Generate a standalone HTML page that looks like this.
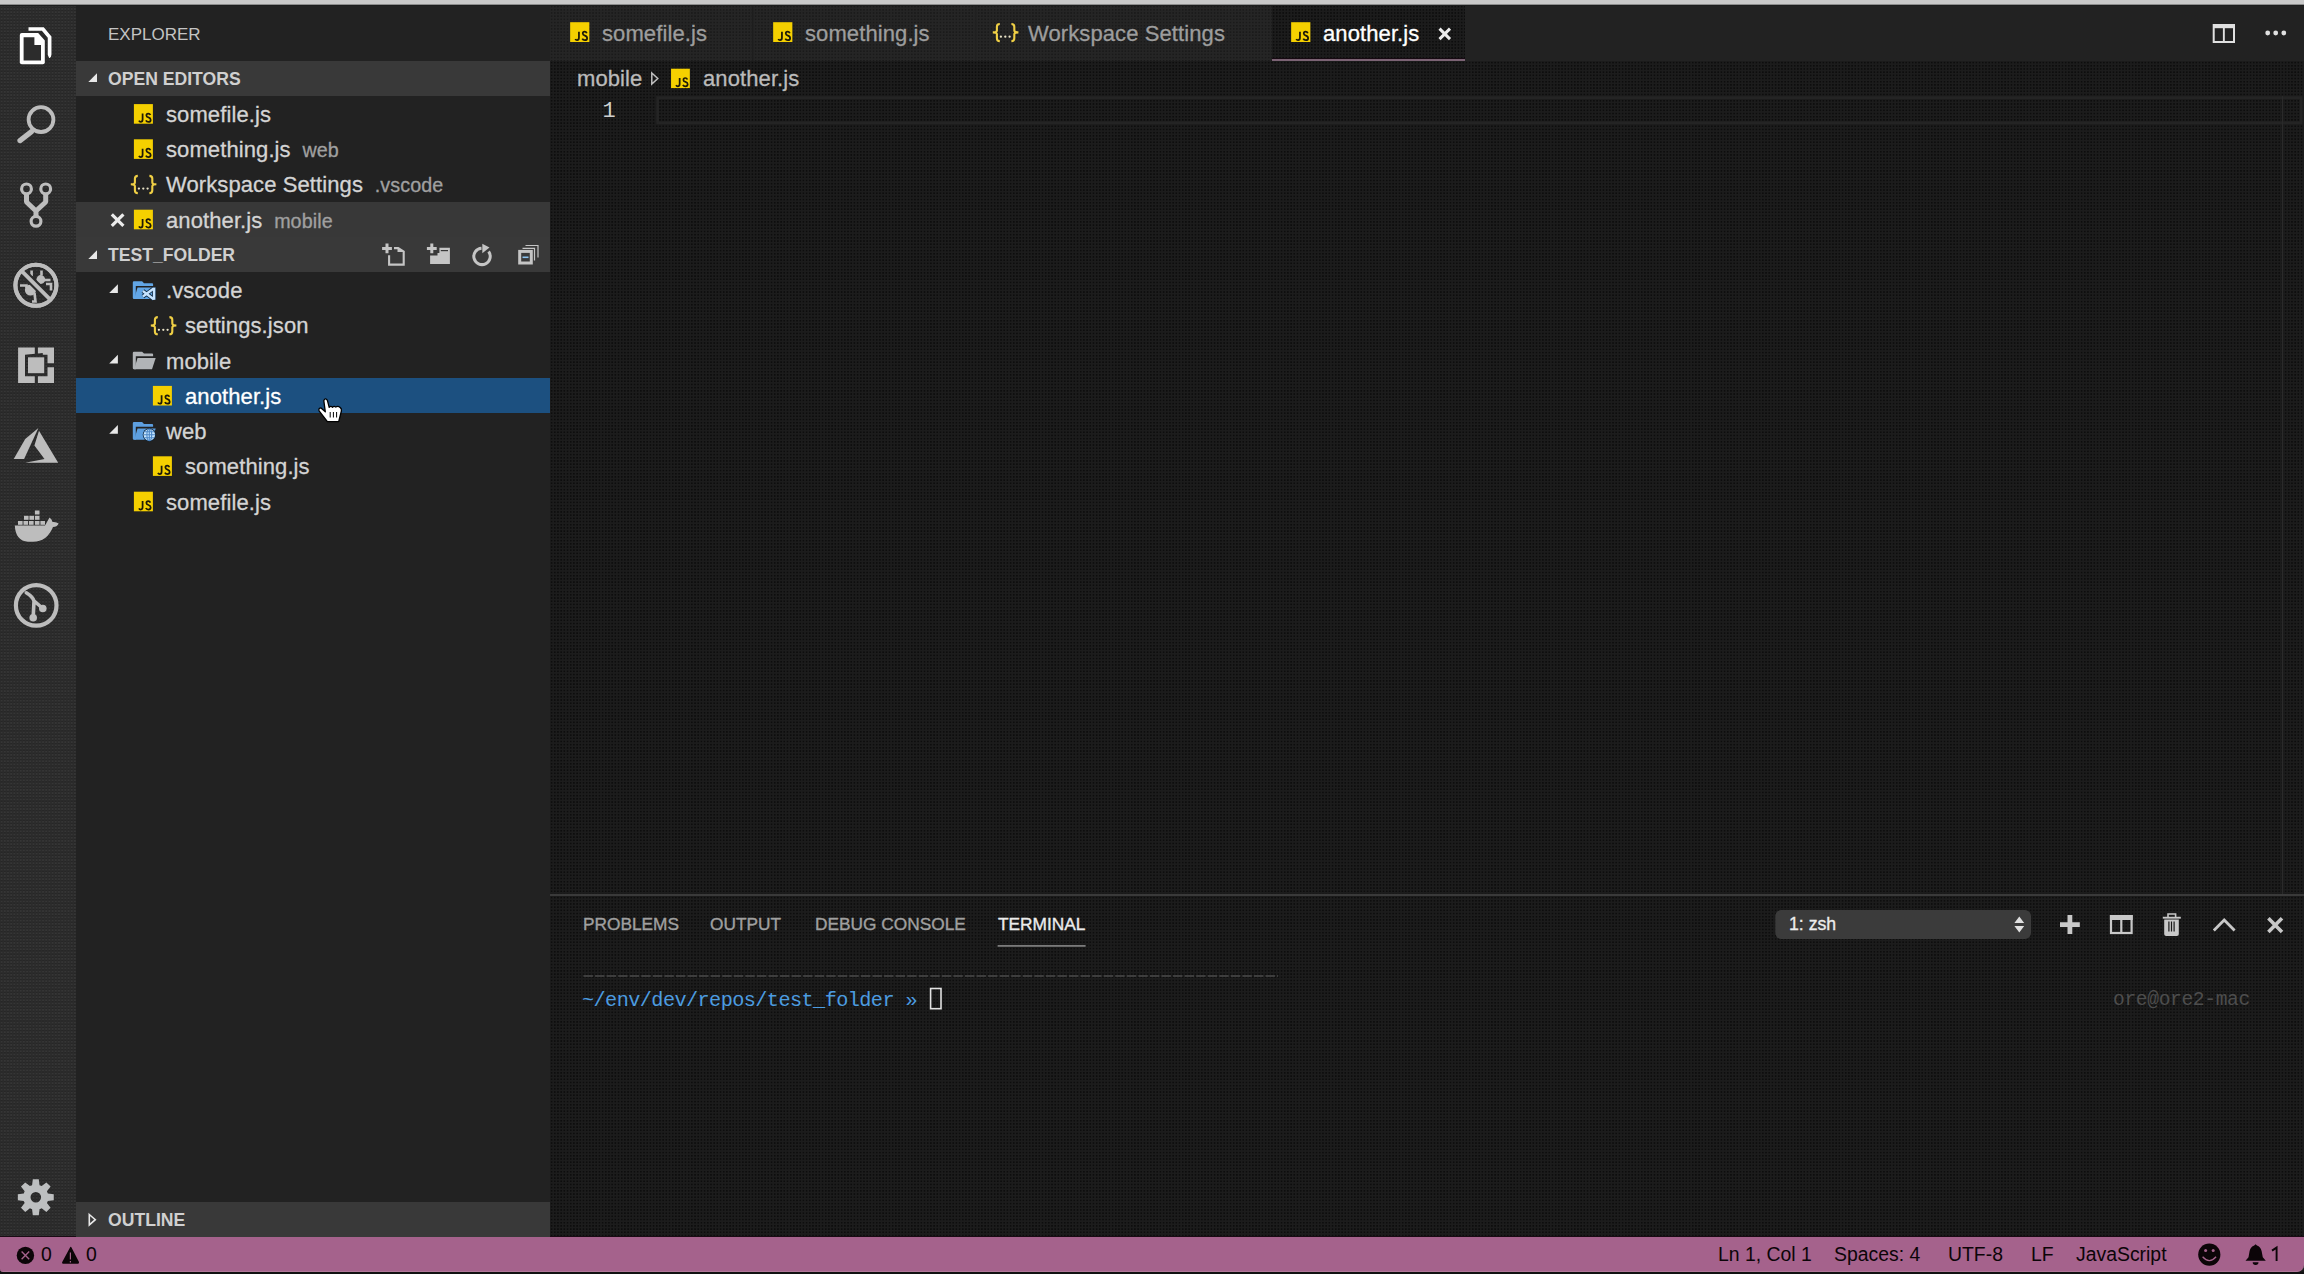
<!DOCTYPE html>
<html><head><meta charset="utf-8">
<style>
html,body{margin:0;padding:0;width:2304px;height:1274px;overflow:hidden;background:#191919;font-family:"Liberation Sans",sans-serif;}
div,span,svg{box-sizing:border-box}
.a{position:absolute}
#topbar{left:0;top:0;width:2304px;height:5px;background:#c9c9c9;border-bottom:1px solid #8c8c8c}
#topline{left:0;top:5px;width:2304px;height:1px;background:#1c1d1d;z-index:5}
#act{left:0;top:5px;width:76px;height:1232px}
#side{left:76px;top:5px;width:474px;height:1232px;background:#222222}
#tabs{left:550px;top:5px;width:1754px;height:56px;background:#222222}
#bc{left:550px;top:61px;width:1754px;height:35px}
#editor{left:550px;top:96px;width:1754px;height:798px}
#panel{left:550px;top:894px;width:1754px;height:343px;border-top:2px solid #3a3a3a}
#status{left:0;top:1236px;width:2304px;height:36px;background:#a5628c;border-top:1px solid #1a0b14;border-bottom:1px solid #b07898;border-radius:0 0 7px 3px}
#bottom{left:0;top:1272px;width:2304px;height:2px;background:#111}
.txt{white-space:nowrap;font-size:22px;color:#d4d4d4;line-height:35px;margin-top:1px;letter-spacing:0.1px;-webkit-text-stroke:0.3px currentColor}
.hdr{white-space:nowrap;font-size:17.6px;font-weight:bold;color:#d0d0d0;line-height:35px;margin-top:1px}
.mono{font-family:"Liberation Mono",monospace;font-size:20.2px;letter-spacing:-0.56px;line-height:35px;white-space:nowrap}
.st{top:1237px;font-size:19.4px;color:#0c0508;line-height:35px;white-space:nowrap}

div.a.dots{background-color:#1c1c1c;background-image:radial-gradient(circle at 50% 50%, #0d0d0d 0.75px, rgba(13,13,13,0) 1.25px);background-size:3.2px 3.2px}
div.a.dots2{background-color:#252525;background-image:radial-gradient(circle at 50% 50%, #1a1a1a 0.75px, rgba(26,26,26,0) 1.25px);background-size:3.2px 3.2px}
div.a.dots3{background-color:#2b2b2b;background-image:radial-gradient(circle at 50% 25%, #363636 0.7px, rgba(54,54,54,0) 1.2px),radial-gradient(circle at 50% 75%, #262626 0.7px, rgba(38,38,38,0) 1.2px);background-size:3.2px 3.2px}
.desc{font-size:19.7px;color:#a0a0a0}
</style></head><body>
<div id="topbar" class="a"></div>
<div id="topline" class="a"></div>
<div id="act" class="a dots3"></div>
<div id="side" class="a"></div>
<div id="tabs" class="a"></div>
<div class="a dots2" style="left:550px;top:5px;width:722px;height:56px"></div>
<div id="bc" class="a dots"></div>
<div id="editor" class="a dots"></div>
<div id="panel" class="a dots"></div>
<div id="status" class="a"></div>
<div id="bottom" class="a"></div>
<div class="a" style="left:76px;top:61px;width:474px;height:35px;background:#393939"></div>
<div class="a" style="left:76px;top:202px;width:474px;height:35px;background:#383838"></div>
<div class="a" style="left:76px;top:237px;width:474px;height:35px;background:#393939"></div>
<div class="a" style="left:76px;top:378px;width:474px;height:35px;background:#1c5080"></div>
<div class="a" style="left:76px;top:1202px;width:474px;height:35px;background:#393939"></div>
<div class="a dots" style="left:1272px;top:5px;width:193px;height:56px;border-bottom:2px solid #7b6374"></div><div class="a" style="left:1272px;top:58px;width:193px;height:1px;background:#170a12"></div>

<svg class="a" style="left:0;top:0" width="2304" height="1274" viewBox="0 0 2304 1274">
<defs>
<symbol id="js" viewBox="0 0 19 19.6" overflow="visible">
<rect x="0" y="0" width="19" height="19.6" fill="#f5d000"/>
<path d="M8.7 9.4 V15.5 Q8.7 17.8 6.8 17.8 Q5.6 17.8 5.1 16.6" fill="none" stroke="#1e1a08" stroke-width="1.75"/>
<path d="M16.5 10.9 Q15.9 9.4 14.3 9.4 Q12.5 9.4 12.5 11.3 Q12.5 12.7 14.6 13.3 Q16.8 13.9 16.8 15.8 Q16.8 17.8 14.5 17.8 Q12.7 17.8 12 16.3" fill="none" stroke="#1e1a08" stroke-width="1.75"/>
</symbol>
<symbol id="json" viewBox="0 0 27 19" overflow="visible">
<path d="M7.8 0.9 Q4.9 0.9 4.9 3.6 L4.9 7.4 Q4.9 9.3 0.8 9.3 Q4.9 9.3 4.9 11.3 L4.9 15.2 Q4.9 18.1 7.8 18.1" fill="none" stroke="#efcf45" stroke-width="2.1"/>
<path d="M19.4 0.9 Q22.3 0.9 22.3 3.6 L22.3 7.4 Q22.3 9.3 26.4 9.3 Q22.3 9.3 22.3 11.3 L22.3 15.2 Q22.3 18.1 19.4 18.1" fill="none" stroke="#efcf45" stroke-width="2.1"/>
<circle cx="8.9" cy="13.6" r="1.15" fill="#e9e3c8"/><circle cx="13.3" cy="13.6" r="1.15" fill="#e9e3c8"/><circle cx="17.6" cy="13.6" r="1.15" fill="#e9e3c8"/>
</symbol>
<symbol id="tw" viewBox="0 0 9 9" overflow="visible"><path d="M0 8.7 L8.7 0 L8.7 8.7 Z" fill="#e8e8e8"/></symbol>
<symbol id="folder" viewBox="0 0 23 18" overflow="visible">
<path d="M0 1.2 Q0 0 1.2 0 L9.3 0 L11.2 1.9 L19.3 1.9 Q20.3 1.9 20.3 2.9 L20.3 4.6 L3 4.6 L3 17.6 L1.2 17.6 Q0 17.6 0 16.4 Z" fill="currentColor"/>
<path d="M4.7 6.3 L22.9 6.3 L19.2 17.6 L1.4 17.6 Z" fill="currentColor"/>
</symbol>
</defs>

<!-- ===== activity bar ===== -->
<!-- explorer -->
<path d="M28.5 29 L42.9 29 L49.6 37.2 L49.6 54.5 Q49.6 56 48.5 56.5" fill="none" stroke="#fff" stroke-width="3.7" stroke-linejoin="miter"/>
<path d="M21.8 33 L38.2 33 L44.8 40.5 L44.8 62.2 Q44.8 64.2 42.8 64.2 L21.8 64.2 Q19.8 64.2 19.8 62.2 L19.8 35 Q19.8 33 21.8 33 Z" fill="#fff" stroke="#2c2c2c" stroke-width="3"/>
<path d="M21.8 33 L38.2 33 L44.8 40.5 L44.8 62.2 Q44.8 64.2 42.8 64.2 L21.8 64.2 Q19.8 64.2 19.8 62.2 L19.8 35 Q19.8 33 21.8 33 Z" fill="#fff"/>
<path d="M23.6 37.2 L34.4 37.2 L34.4 45.1 L41 45.1 L41 60.4 L23.6 60.4 Z" fill="#2c2c2c"/>
<!-- search -->
<g fill="none" stroke="#bdbdbd">
<circle cx="41" cy="119.6" r="12.4" stroke-width="3.8"/>
<path d="M20 140.6 L31.5 131.6" stroke-width="5.2" stroke-linecap="round"/>
</g>
<!-- git -->
<g fill="none" stroke="#bdbdbd" stroke-width="3.2">
<circle cx="26.5" cy="188.9" r="4.9"/><circle cx="45.7" cy="188.9" r="4.9"/><circle cx="36" cy="221.3" r="4.9"/>
</g>
<path d="M26.5 193.5 L26.5 202 L36 211 L45.7 202 L45.7 193.5 M36 211 L36 216.5" fill="none" stroke="#bdbdbd" stroke-width="5" stroke-linejoin="bevel"/>
<!-- debug -->
<circle cx="35.9" cy="285.3" r="20.5" fill="none" stroke="#bdbdbd" stroke-width="4"/>
<g fill="none" stroke="#bdbdbd" stroke-width="2.6">
<path d="M20 285.5 L26.5 285.5 L26.5 288"/>
<path d="M31.6 270.5 L31.6 276"/>
<path d="M41.5 270.5 L41.5 275"/>
<path d="M44 280 L50.5 280"/>
<path d="M46 284 L51 284 L51 290.5"/>
<path d="M34.5 293 L35.5 301.5 L32 301.5"/>
</g>
<circle cx="30.5" cy="290" r="5.6" fill="#bdbdbd"/>
<circle cx="40.8" cy="279.5" r="4.4" fill="#bdbdbd"/>
<path d="M21.5 270.9 L50.3 299.7" stroke="#2c2c2c" stroke-width="8"/>
<path d="M21.5 270.9 L50.3 299.7" stroke="#bdbdbd" stroke-width="3.8"/>
<circle cx="35.9" cy="285.3" r="20.5" fill="none" stroke="#bdbdbd" stroke-width="4"/>
<!-- extensions -->
<path fill="#bdbdbd" fill-rule="evenodd" d="M18.1 347.6 H54 V383.1 H18.1 Z M25 354.8 V376.2 H47.5 V367.2 H54 V363.3 H47.5 V354.8 H42.8 V353 Z"/>
<rect x="28" y="357.3" width="16.2" height="15.9" fill="#bdbdbd"/>
<rect x="34.8" y="346" width="3.1" height="9" fill="#2c2c2c"/>
<rect x="34.8" y="376" width="3.1" height="8" fill="#2c2c2c"/>
<!-- azure -->
<g fill="#bdbdbd">
<path d="M13.7 458.9 L24.1 458.9 L38.4 428.1 L25.2 439.1 Z"/>
<path d="M39 430.8 L58.2 462.7 L25.2 462.7 L44.5 458.9 L34.4 445.5 Z"/>
</g>
<!-- docker -->
<g fill="#bdbdbd">
<path d="M14.8 525.6 L45 525.6 Q47 522 49.5 517.5 Q52 519 52.5 522 Q56 521.5 58.7 523.5 Q57 527 53 527 Q47 541.8 33 541.8 L28 541.8 Q15.5 541 14.8 525.6 Z"/>
<rect x="18" y="521" width="4.6" height="3.8"/><rect x="23.5" y="521" width="4.6" height="3.8"/><rect x="29" y="521" width="4.6" height="3.8"/><rect x="34.9" y="521" width="4.6" height="3.8"/><rect x="40.4" y="521" width="4.6" height="3.8"/>
<rect x="24" y="515.8" width="4.6" height="4"/><rect x="29.4" y="515.8" width="4.6" height="4"/><rect x="34.9" y="515.8" width="4.6" height="4"/>
<rect x="34.9" y="510.5" width="4.6" height="4"/>
</g>
<!-- gitlens -->
<circle cx="36.2" cy="605.4" r="20.3" fill="none" stroke="#bdbdbd" stroke-width="4.2"/>
<path d="M26.3 592.8 Q33 597 34 601 L33.2 617 M34.2 601 L42.8 608.5" fill="none" stroke="#bdbdbd" stroke-width="3.6" stroke-linecap="round"/>
<circle cx="33.2" cy="617.8" r="3.8" fill="#bdbdbd"/><circle cx="42.8" cy="608.5" r="3.8" fill="#bdbdbd"/>
<!-- gear -->
<path fill="#bdbfc0" fill-rule="evenodd" d="M32.08 1185.16 L32.81 1179.25 L38.79 1179.25 L39.52 1185.16 L41.68 1186.06 L46.38 1182.39 L50.61 1186.62 L46.94 1191.32 L47.84 1193.48 L53.75 1194.21 L53.75 1200.19 L47.84 1200.92 L46.94 1203.08 L50.61 1207.78 L46.38 1212.01 L41.68 1208.34 L39.52 1209.24 L38.79 1215.15 L32.81 1215.15 L32.08 1209.24 L29.92 1208.34 L25.22 1212.01 L20.99 1207.78 L24.66 1203.08 L23.76 1200.92 L17.85 1200.19 L17.85 1194.21 L23.76 1193.48 L24.66 1191.32 L20.99 1186.62 L25.22 1182.39 L29.92 1186.06 Z M41.10 1197.2 A5.3 5.3 0 1 0 30.50 1197.2 A5.3 5.3 0 1 0 41.10 1197.2 Z"/>

<!-- ===== sidebar icons ===== -->
<use href="#tw" x="88.3" y="73.3" width="9" height="9"/>
<use href="#tw" x="88.3" y="250.3" width="9" height="9"/>
<use href="#tw" x="109.2" y="284.3" width="9" height="9"/>
<use href="#tw" x="109.2" y="354.7" width="9" height="9"/>
<use href="#tw" x="109.2" y="425.1" width="9" height="9"/>
<path d="M89.3 1214.5 L95.3 1219.7 L89.3 1224.9 Z" fill="none" stroke="#e8e8e8" stroke-width="1.6" stroke-linejoin="miter"/>

<use href="#js" x="133.9" y="104.1" width="19" height="19.6"/>
<use href="#js" x="133.9" y="139.3" width="19" height="19.6"/>
<use href="#json" x="130" y="175" width="27" height="19"/>
<use href="#js" x="133.9" y="209.7" width="19" height="19.6"/>
<path d="M111.8 214.3 L123.4 225.9 M123.4 214.3 L111.8 225.9" stroke="#ececec" stroke-width="3.2"/>

<use href="#folder" x="132.8" y="281.3" width="23" height="18" style="color:#62a6e6"/>
<g transform="translate(141.7 287)" fill="none" stroke-linecap="butt">
<g stroke="#0d2a45" stroke-width="4.2"><path d="M12.4 0.8 V12.8"/><path d="M12 1.4 L1.2 9.6"/><path d="M12 12.2 L1.2 4"/></g>
<g stroke="#c5e3ff" stroke-width="2.5"><path d="M12.4 0.8 V12.8"/><path d="M12 1.4 L1.2 9.6"/><path d="M12 12.2 L1.2 4"/></g>
</g>
<use href="#json" x="150" y="316.2" width="27" height="19"/>
<use href="#folder" x="132.8" y="351.7" width="23" height="18" style="color:#b1b4b7"/>
<use href="#js" x="152.9" y="385.9" width="19" height="19.6"/>
<use href="#folder" x="132.8" y="422.1" width="23" height="18" style="color:#5d9fe0"/>
<circle cx="149.3" cy="434.8" r="6.6" fill="#0b2238"/>
<circle cx="149.3" cy="434.8" r="5.8" fill="#c6e6ff"/>
<g fill="none" stroke="#4d88c8" stroke-width="1.1">
<ellipse cx="149.3" cy="434.8" rx="2.4" ry="5.8"/>
<path d="M143.5 434.8 H155.1 M144.4 431.8 H154.2 M144.4 437.8 H154.2 M149.3 429 V440.6"/>
</g>
<use href="#js" x="152.9" y="456.3" width="19" height="19.6"/>
<use href="#js" x="133.9" y="491.7" width="19" height="19.6"/>

<!-- toolbar -->
<g fill="none" stroke="#c5c5c5" stroke-width="2.1">
<path d="M389.1 255.2 V264.6 H403.7 V251.6 L398.2 248.1 H394"/>
</g>
<path d="M397.5 247.5 L404.5 252 L397.5 252 Z" fill="#c5c5c5"/>
<path d="M382.1 248.4 H391.9 M387 243.5 V253.3" stroke="#c5c5c5" stroke-width="3"/>
<path d="M426.9 248.4 H436.7 M431.8 243.5 V253.3" stroke="#c5c5c5" stroke-width="3"/>
<path d="M437.5 252.9 L439.4 252.9 L439.4 247.7 L449.9 247.7 L449.9 264.1 L430.1 264.1 L430.1 255.5 L437.5 255.5 Z" fill="#c5c5c5"/>
<path d="M440.8 250.6 H448" stroke="#383838" stroke-width="1.2"/>
<path d="M488.6 251.5 A8.2 8.2 0 1 1 481.5 248.2" fill="none" stroke="#c5c5c5" stroke-width="3"/>
<path d="M482.3 243.8 L489.5 247.6 L482.3 253.3 Z" fill="#c5c5c5"/>
<rect x="519.7" y="251.4" width="11.6" height="11.6" fill="none" stroke="#c5c5c5" stroke-width="3"/>
<path d="M522.5 257.3 H528.5" stroke="#8cc4f0" stroke-width="1.6"/>
<path d="M522.5 248.4 H534.5 V260.5" fill="none" stroke="#c5c5c5" stroke-width="1.2"/>
<path d="M525.5 245.5 H538 V257.5" fill="none" stroke="#c5c5c5" stroke-width="1.2"/>

<!-- cursor -->
<path d="M323.8 400.6 Q325.4 397.3 327.4 400.4 L329.2 407.4 Q330.8 405.6 332.5 407.2 Q334.1 405.5 335.8 407.1 Q337.8 405.6 340.1 407.4 Q341.8 408.6 341.4 411 L338.7 421.6 L327.4 421.6 L319.1 410.9 Q318.2 408.4 320.7 407.8 L325.3 411.8 Z" fill="#fff" stroke="#000" stroke-width="1.3" stroke-linejoin="round"/>
<path d="M330.2 412 V417.5 M333.4 412 V417.5 M336.6 412 V417.5" stroke="#000" stroke-width="1"/>

<!-- ===== tabs ===== -->
<use href="#js" x="570" y="22.2" width="19.5" height="19.8"/>
<use href="#js" x="773" y="22.2" width="19.5" height="19.8"/>
<use href="#json" x="992" y="22.8" width="27" height="19.5"/>
<use href="#js" x="1291" y="22.2" width="19.5" height="19.8"/>
<path d="M1439.5 28.6 L1450 39.1 M1450 28.6 L1439.5 39.1" stroke="#eeeeee" stroke-width="3"/>
<rect x="752" y="5" width="1.2" height="56" fill="#1d1d1d"/>
<rect x="975" y="5" width="1.2" height="56" fill="#202020"/>
<!-- split & more -->
<rect x="2213.7" y="25" width="20.3" height="17" fill="none" stroke="#e0e0e0" stroke-width="2"/>
<rect x="2213" y="24.2" width="21.7" height="4" fill="#e0e0e0"/>
<rect x="2222.9" y="25" width="1.9" height="17" fill="#e0e0e0"/>
<circle cx="2267.7" cy="33" r="2.4" fill="#e0e0e0"/><circle cx="2275.7" cy="33" r="2.4" fill="#e0e0e0"/><circle cx="2283.8" cy="33" r="2.4" fill="#e0e0e0"/>

<!-- ===== breadcrumb ===== -->
<path d="M651.8 73 L657.8 78.5 L651.8 84 Z" fill="none" stroke="#c0c0c0" stroke-width="1.5"/>
<use href="#js" x="670.8" y="68.7" width="19.3" height="19.4"/>

<!-- ===== editor ===== -->
<rect x="657.6" y="97.6" width="1643.5" height="25.2" fill="none" stroke="#242424" stroke-width="2.8"/>
<rect x="2282" y="96" width="1" height="798" fill="#2a2a2a"/>

<!-- ===== panel ===== -->
<rect x="997.6" y="945" width="88" height="1.8" fill="#7a7a7a"/>
<rect x="1775.3" y="910" width="255.7" height="28.9" rx="6" fill="#3b3b3b"/>
<path d="M2014.4 923 L2019.3 916.6 L2024.2 923 Z M2014.4 926 L2019.3 932.6 L2024.2 926 Z" fill="#e0e0e0"/>
<path d="M2060 924.6 H2079.8 M2069.9 915 V934.1" stroke="#c8c8c8" stroke-width="4.8"/>
<rect x="2111" y="916.1" width="20.6" height="16.9" fill="none" stroke="#c8c8c8" stroke-width="2.2"/>
<rect x="2109.9" y="915" width="22.8" height="5" fill="#c8c8c8"/>
<rect x="2120.2" y="915" width="2.2" height="19" fill="#c8c8c8"/>
<path d="M2162.8 917.7 H2180.8" stroke="#c8c8c8" stroke-width="1.9"/>
<path d="M2168 918 V914 H2175.6 V918" fill="none" stroke="#c8c8c8" stroke-width="1.6"/>
<path d="M2164.2 919.5 H2178.8 V934 Q2178.8 935.9 2176.9 935.9 H2166.1 Q2164.2 935.9 2164.2 934 Z" fill="#c8c8c8"/>
<path d="M2168.9 921.5 V931.5 M2171.5 921.5 V931.5 M2174.1 921.5 V931.5" stroke="#191919" stroke-width="1.2"/>
<path d="M2213.8 930.5 L2224.2 920 L2234.6 930.5" fill="none" stroke="#c8c8c8" stroke-width="2.8"/>
<path d="M2268.4 918.3 L2282 931.9 M2282 918.3 L2268.4 931.9" stroke="#c8c8c8" stroke-width="3.6"/>
<path d="M583.5 976 H1278" stroke="#4a4a4a" stroke-width="1.5" stroke-dasharray="9.4 2.16"/>
<rect x="930.6" y="988.5" width="10.4" height="20.2" fill="none" stroke="#e2e2e2" stroke-width="1.6"/>

<!-- ===== status ===== -->
<circle cx="25.4" cy="1255.4" r="8.7" fill="#0c0508"/>
<path d="M21.6 1251.6 L29.2 1259.2 M29.2 1251.6 L21.6 1259.2" stroke="#a4628b" stroke-width="1.4"/>
<path d="M70.3 1247 Q71 1246.5 71.5 1247.5 L79 1262 Q79.3 1263.7 78 1263.7 L63 1263.7 Q61.7 1263.7 62.1 1262.3 Z" fill="#0c0508"/>
<path d="M70.4 1252.6 V1259.5 M70.4 1261 V1262.4" stroke="#a4628b" stroke-width="1.2"/>
<circle cx="2209.3" cy="1254.6" r="11.1" fill="#0c0508"/>
<circle cx="2205.6" cy="1250.4" r="1.5" fill="#a4628b"/><circle cx="2213.2" cy="1250.4" r="1.5" fill="#a4628b"/>
<path d="M2202.6 1256.8 Q2209.3 1264.5 2216.1 1256.8" fill="none" stroke="#a4628b" stroke-width="1.3"/>
<path d="M2255.6 1244.2 L2257 1245.6 Q2260.5 1246.8 2261.6 1251 L2262.8 1257.3 L2265.8 1260.8 L2245.5 1260.8 L2248.5 1257.3 L2249.6 1251 Q2250.7 1246.8 2254.2 1245.6 Z" fill="#0c0508"/>
<path d="M2252.7 1262.3 A2.9 2.6 0 0 0 2258.5 1262.3 Z" fill="#0c0508"/>
<path d="M2272 1250.6 L2276.6 1247.6 L2276.6 1261" fill="none" stroke="#0c0508" stroke-width="1.9" stroke-linejoin="miter"/>
</svg>

<!-- sidebar -->
<div class="a" style="left:108px;top:17px;font-size:17px;color:#c4c4c4;line-height:35px;white-space:nowrap">EXPLORER</div>
<div class="a hdr" style="left:108px;top:61px">OPEN EDITORS</div>
<div class="a txt" style="left:166px;top:96px">somefile.js</div>
<div class="a txt" style="left:166px;top:131px">something.js <span class="desc" style="margin-left:5.5px">web</span></div>
<div class="a txt" style="left:166px;top:166px">Workspace Settings <span class="desc" style="margin-left:5.5px">.vscode</span></div>
<div class="a txt" style="left:166px;top:202px">another.js <span class="desc" style="margin-left:5.5px">mobile</span></div>
<div class="a hdr" style="left:108px;top:237px">TEST_FOLDER</div>
<div class="a txt" style="left:166px;top:272px">.vscode</div>
<div class="a txt" style="left:185px;top:307px">settings.json</div>
<div class="a txt" style="left:166px;top:343px">mobile</div>
<div class="a txt" style="left:185px;top:378px;color:#fff">another.js</div>
<div class="a txt" style="left:166px;top:413px">web</div>
<div class="a txt" style="left:185px;top:448px">something.js</div>
<div class="a txt" style="left:166px;top:484px">somefile.js</div>
<div class="a hdr" style="left:108px;top:1202px">OUTLINE</div>

<!-- tabs -->
<div class="a txt" style="left:602px;top:15px;color:#9d9d9d">somefile.js</div>
<div class="a txt" style="left:805px;top:15px;color:#9d9d9d">something.js</div>
<div class="a txt" style="left:1028px;top:15px;color:#9d9d9d">Workspace Settings</div>
<div class="a txt" style="left:1323px;top:15px;color:#fff">another.js</div>

<!-- breadcrumb -->
<div class="a txt" style="left:577px;top:60.4px;color:#bbbbbb">mobile</div>
<div class="a txt" style="left:703px;top:60.4px;color:#bbbbbb">another.js</div>

<!-- panel -->
<div class="a" style="left:583px;top:907px;font-size:17.3px;color:#a0a0a0;line-height:35px;white-space:nowrap;-webkit-text-stroke:0.35px currentColor">PROBLEMS</div>
<div class="a" style="left:710px;top:907px;font-size:17.3px;color:#a0a0a0;line-height:35px;white-space:nowrap;-webkit-text-stroke:0.35px currentColor">OUTPUT</div>
<div class="a" style="left:815px;top:907px;font-size:17.3px;color:#a0a0a0;line-height:35px;white-space:nowrap;-webkit-text-stroke:0.35px currentColor">DEBUG CONSOLE</div>
<div class="a" style="left:998px;top:907px;font-size:17.3px;color:#ececec;line-height:35px;white-space:nowrap;-webkit-text-stroke:0.35px currentColor">TERMINAL</div>

<!-- status -->
<div class="a mono" style="left:582px;top:982.5px;color:#4c9ce0">~/env/dev/repos/test_folder »</div>
<div class="a mono" style="left:2113px;top:982.5px;color:#4d4d4d;font-size:19.6px;letter-spacing:-0.35px">ore@ore2-mac</div>
<div class="a" style="left:1789px;top:907px;font-size:17.7px;color:#ececec;line-height:35px;white-space:nowrap;-webkit-text-stroke:0.3px currentColor">1: zsh</div>
<div class="a mono" style="left:602.5px;top:94px;color:#cfcfcf;font-size:22px;letter-spacing:0;line-height:35px">1</div>
<div class="a st" style="left:41px">0</div>
<div class="a st" style="left:86px">0</div>
<div class="a st" style="left:1834px">Spaces: 4</div>
<div class="a st" style="left:1948px">UTF-8</div>
<div class="a st" style="left:2031px">LF</div>
<div class="a st" style="left:2076px">JavaScript</div>


<div class="a st" style="left:1718px">Ln 1, Col 1</div>


</body></html>
